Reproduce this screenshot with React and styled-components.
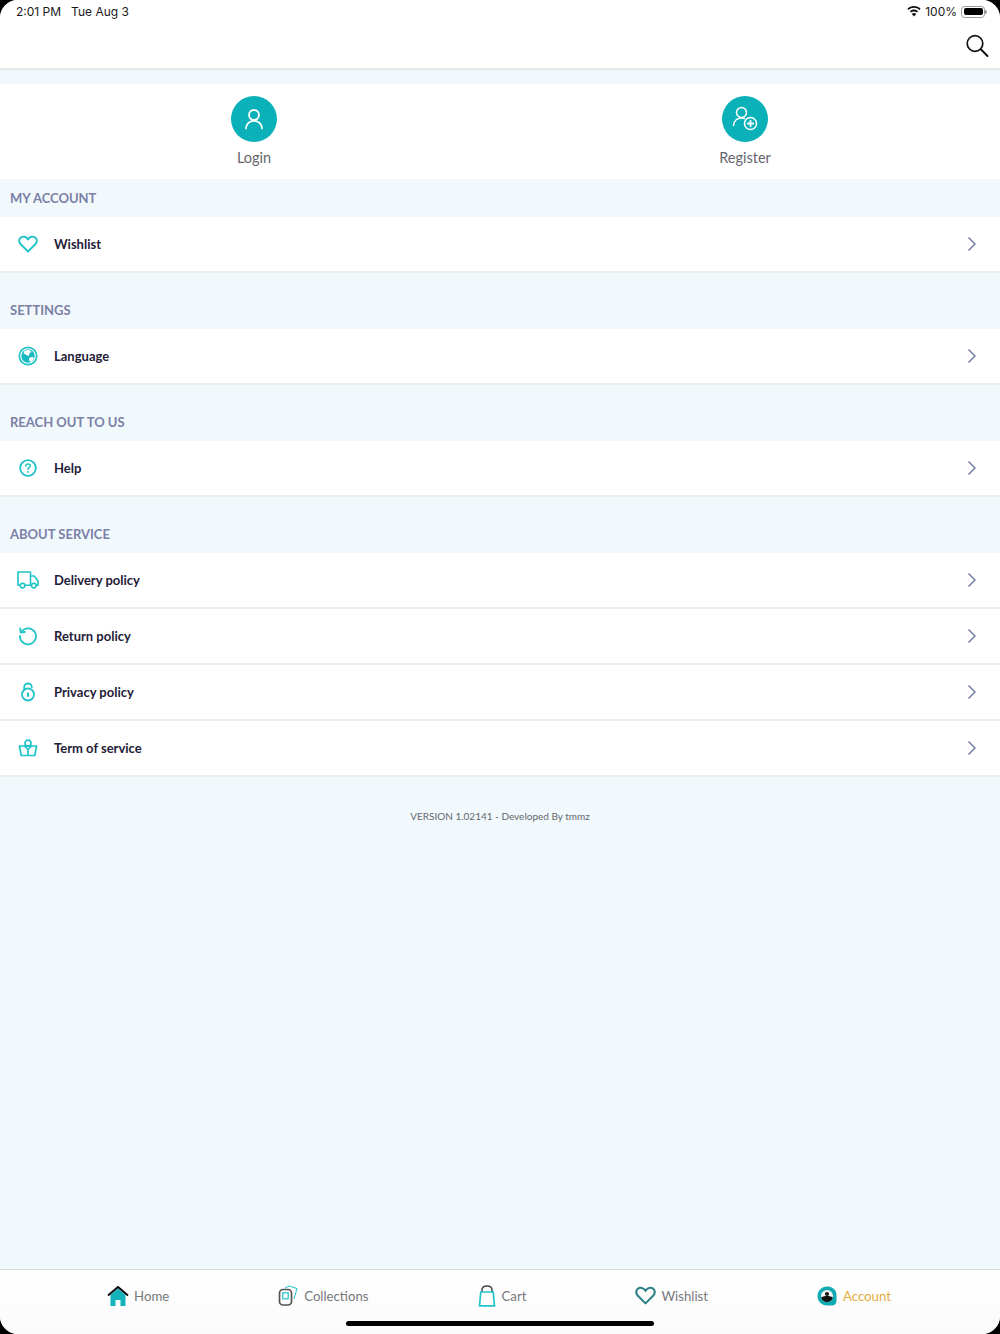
import React from 'react';
import styled, { createGlobalStyle } from 'styled-components';
import { ChevronRight } from 'lucide-react';

const TEAL = '#1fc4c9';

const Global = createGlobalStyle`
  html, body {
    margin: 0;
    padding: 0;
    background: #000;
  }
  * {
    box-sizing: border-box;
  }
`;

const HeartIcon = ({ color = TEAL, size = 20, width = 2.300 }) => (
  <svg width={size} height={size} viewBox="0 0 24 24" fill="none" stroke={color} strokeWidth={width} strokeLinejoin="round">
    <path d="M12 21 3 12C.6 9.400 1 5.800 3.400 4.100 6 2.300 9.900 3 12 6.600 14.100 3 18 2.300 20.600 4.100 23 5.800 23.400 9.400 21 12Z" />
  </svg>
);

const GlobeIcon = () => (
  <svg width="20" height="20" viewBox="0 0 20 20">
    <circle cx="10" cy="10" r="8.700" fill="none" stroke={TEAL} strokeWidth="1.700" />
    <circle cx="10" cy="10" r="6.700" fill="#17b8be" />
    <path d="M6.500 4.800 10.500 3.800l3 2-2.200 1.700L11 10 8.500 9 5.500 7.500ZM11 12l3.500-1.200 1.500 1.500-2.500 3.700-2.200-1Z" fill="#fff" />
  </svg>
);

const HelpIcon = () => (
  <svg width="20" height="20" viewBox="0 0 20 20" fill="none" stroke={TEAL} strokeWidth="1.800" strokeLinecap="round">
    <circle cx="10" cy="10" r="7.800" />
    <path d="M7.800 8.100C7.900 6.800 8.900 6.100 10 6.100 11.300 6.100 12.300 6.900 12.300 8 12.300 9.500 10 9.600 10 11.200" strokeWidth="1.500" />
    <path d="M10 13.800v.1" />
  </svg>
);

const TruckIcon = () => (
  <svg width="22" height="18" viewBox="0 0 22 18" fill="none" stroke={TEAL} strokeWidth="1.600" strokeLinejoin="round">
    <path d="M3.200 14.300H1V1h12.500v13.300H8" />
    <path d="M13.500 5h3.800l3.700 5v4.300h-2" />
    <path d="M13.500 14.300h1.300" />
    <circle cx="5.600" cy="14.600" r="2.300" />
    <circle cx="16.800" cy="14.600" r="2.300" />
  </svg>
);

const ReturnIcon = () => (
  <svg width="20" height="20" viewBox="0 0 20 20" fill="none" stroke={TEAL} strokeWidth="1.800" strokeLinecap="round" strokeLinejoin="round">
    <path d="M4.300 4.700A8 8 0 1 1 2 10" />
    <path d="M2.200 2.500 2.700 6.500 6.700 6" />
  </svg>
);

const LockIcon = () => (
  <svg width="18" height="20" viewBox="0 0 18 20" fill="none" stroke={TEAL} strokeWidth="1.800" strokeLinecap="round">
    <circle cx="9" cy="12.500" r="6" />
    <path d="M5.200 7.800V5.200C5.200 3 7 1.500 9 1.500S12.800 3 12.800 5.200" />
    <path d="M9 11.500v2.500" strokeWidth="2.200" />
  </svg>
);

const BasketIcon = () => (
  <svg width="20" height="18" viewBox="0 0 20 18" fill="none" stroke={TEAL} strokeWidth="1.700" strokeLinejoin="round">
    <path d="M1.500 7h17l-1.700 9.500H3.200Z" />
    <path d="M6.500 7 10 10.500 13.500 7" />
    <path d="M10 10.500v6" />
    <circle cx="10" cy="4.200" r="3" />
  </svg>
);

const UserIcon = () => (
  <svg width="22" height="24" viewBox="0 0 22 24" fill="none" stroke="#fff" strokeWidth="1.800" strokeLinecap="round">
    <circle cx="11" cy="8" r="5" />
    <path d="M3 21.500C3.500 16.500 7 13.800 11 13.800S18.500 16.500 19 21.500" />
  </svg>
);

const UserPlusIcon = () => (
  <svg width="28" height="28" viewBox="0 0 28 28" fill="none" stroke="#fff" strokeWidth="1.500" strokeLinecap="round">
    <circle cx="10.500" cy="7.500" r="5" />
    <path d="M2.500 20.500C3 15.500 6.500 13 10.500 13 11.500 13 12.500 13.200 13.400 13.500" />
    <circle cx="19.500" cy="18.500" r="6" />
    <path d="M19.500 15.800v5.400M16.800 18.500h5.400" strokeWidth="1.800" />
  </svg>
);

const SearchIcon = () => (
  <svg width="24" height="24" viewBox="0 0 24 24" fill="none" stroke="#111" strokeWidth="1.700" strokeLinecap="round">
    <circle cx="10" cy="9.500" r="7.800" />
    <path d="M15.800 15.300 22.500 22" strokeWidth="2" />
  </svg>
);

const WifiIcon = () => (
  <svg width="14" height="11" viewBox="0 0 14 11" fill="#111">
    <path d="M7 0C4.400 0 2.100 1 .4 2.700l1.200 1.300C3 2.600 4.900 1.800 7 1.800S11 2.600 12.400 4l1.200-1.300C11.900 1 9.600 0 7 0Z" />
    <path d="M7 3.600c-1.600 0-3 .6-4.100 1.700l1.200 1.300C4.900 5.800 5.900 5.400 7 5.400s2.100.4 2.900 1.200l1.200-1.300C10 4.200 8.600 3.600 7 3.600Z" />
    <path d="M7 7.100c-.9 0-1.700.3-2.300.9L7 10.500 9.300 8C8.700 7.400 7.900 7.100 7 7.100Z" />
  </svg>
);

const HomeIcon = () => (
  <svg width="22" height="20" viewBox="0 0 22 20">
    <path d="M3.500 9 11 2.500 18.500 9V20H13.500V14H8.500V20H3.500Z" fill="#12b3ba" />
    <path d="M1 9.500 11 1 21 9.500" fill="none" stroke="#0b0b0b" strokeWidth="2" />
  </svg>
);

const CollectionsIcon = () => (
  <svg width="20" height="22" viewBox="0 0 20 22" fill="none">
    <path d="M7 3 11 1 19 3.500 16 14" stroke={TEAL} strokeWidth="1" />
    <rect x="1.500" y="4.500" width="12" height="15.500" rx="3.500" stroke="#555" strokeWidth="1.700" />
    <rect x="4.800" y="7.800" width="5.400" height="6" stroke={TEAL} strokeWidth="1.200" />
  </svg>
);

const CartIcon = () => (
  <svg width="18" height="22" viewBox="0 0 18 22" fill="none">
    <path d="M4 7V5C4 2.500 6 1 9 1S14 2.500 14 5V7" stroke="#444" strokeWidth="1.500" />
    <path d="M2.800 7H15.200L16.500 20.800H1.500Z" stroke={TEAL} strokeWidth="1.700" />
  </svg>
);

const AccountIcon = () => (
  <svg width="20" height="20" viewBox="0 0 20 20">
    <path d="M10 .5C15 .5 19.500 3 19.500 10 19.500 13 20 17 18 18.500 16 20 13 19.500 10 19.500 4.500 19.500.5 15 .5 10S4.500.5 10 .5Z" fill="#12aab2" />
    <circle cx="10" cy="10" r="6" fill="#f4f4f4" />
    <path d="M4.200 11.500A6 6 0 0 0 15.800 11.500C14.500 10.500 12.500 10 10 10S5.500 10.500 4.200 11.500Z" fill="#111" />
    <circle cx="10" cy="8" r="2" fill="#111" />
  </svg>
);

const ChevronIcon = () => <ChevronRight size={24} color="#7b85a8" strokeWidth={1.700} />;

const sections = [
  {
    title: 'MY ACCOUNT',
    first: true,
    rows: [{ label: 'Wishlist', icon: <HeartIcon /> }],
  },
  {
    title: 'SETTINGS',
    rows: [{ label: 'Language', icon: <GlobeIcon /> }],
  },
  {
    title: 'REACH OUT TO US',
    rows: [{ label: 'Help', icon: <HelpIcon /> }],
  },
  {
    title: 'ABOUT SERVICE',
    rows: [
      { label: 'Delivery policy', icon: <TruckIcon /> },
      { label: 'Return policy', icon: <ReturnIcon /> },
      { label: 'Privacy policy', icon: <LockIcon /> },
      { label: 'Term of service', icon: <BasketIcon /> },
    ],
  },
];

const tabs = [
  { label: 'Home', icon: <HomeIcon />, gap: 5 },
  { label: 'Collections', icon: <CollectionsIcon />, gap: 6 },
  { label: 'Cart', icon: <CartIcon />, gap: 6 },
  { label: 'Wishlist', icon: <HeartIcon color="#2f8088" size={21} width={2.400} />, gap: 5 },
  { label: 'Account', icon: <AccountIcon />, gap: 6, active: true },
];

const App = () => (
  <Screen>
    <Global />
    <Rounded>
      <Top>
        <StatusBar>
          <Clock>
            <span>2:01 PM</span>
            <span>Tue Aug 3</span>
          </Clock>
          <StatusRight>
            <WifiIcon />
            <span>100%</span>
            <Battery>
              <BatteryFill />
            </Battery>
          </StatusRight>
        </StatusBar>
        <Header>
          <SearchIcon />
        </Header>
      </Top>

      <Main>
        <AuthCard>
          <AuthItem>
            <AuthCircle>
              <UserIcon />
            </AuthCircle>
            <AuthLabel>Login</AuthLabel>
          </AuthItem>
          <AuthItem>
            <AuthCircle>
              <UserPlusIcon />
            </AuthCircle>
            <AuthLabel>Register</AuthLabel>
          </AuthItem>
        </AuthCard>

        {sections.map((section) => (
          <div key={section.title}>
            <SectionTitle $first={section.first}>{section.title}</SectionTitle>
            {section.rows.map((row) => (
              <Row key={row.label}>
                <RowIcon>{row.icon}</RowIcon>
                <RowLabel>{row.label}</RowLabel>
                <ChevronIcon />
              </Row>
            ))}
          </div>
        ))}

        <Version>VERSION 1.02141 - Developed By tmmz</Version>
      </Main>

      <TabBar>
        <Tabs>
          {tabs.map((tab) => (
            <Tab key={tab.label} $gap={tab.gap}>
              {tab.icon}
              <TabLabel $active={tab.active}>{tab.label}</TabLabel>
            </Tab>
          ))}
        </Tabs>
        <HomeIndicator />
      </TabBar>
    </Rounded>
  </Screen>
);

const Screen = styled.div`
  width: 1000px;
  height: 1334px;
  overflow: hidden;
  background: #000;
  font-family: 'Lato', 'Noto Sans', sans-serif;
`;

const Rounded = styled.div`
  display: flex;
  flex-direction: column;
  height: 100%;
  border-radius: 18px;
  overflow: hidden;
  background: #f2f9fc;
`;

const Top = styled.div`
  height: 70px;
  flex-shrink: 0;
  background: #fff;
  border-bottom: 2px solid #e6e8e8;
`;

const StatusBar = styled.div`
  display: flex;
  justify-content: space-between;
  align-items: center;
  height: 23px;
  padding: 0 15px 0 16px;
  color: #1a1a1a;
  font-family: 'Inter', sans-serif;
  font-size: 12px;
`;

const Clock = styled.div`
  display: flex;
  gap: 10px;
`;

const StatusRight = styled.div`
  display: flex;
  align-items: center;
  gap: 4px;
`;

const Battery = styled.div`
  position: relative;
  width: 24px;
  height: 12px;
  padding: 1.500px;
  border: 1px solid #999;
  border-radius: 3.500px;

  &::after {
    content: '';
    position: absolute;
    top: 3px;
    right: -3px;
    width: 2px;
    height: 4px;
    border-radius: 0 2px 2px 0;
    background: #999;
  }
`;

const BatteryFill = styled.div`
  width: 100%;
  height: 100%;
  border-radius: 2px;
  background: #000;
`;

const Header = styled.div`
  display: flex;
  justify-content: flex-end;
  padding: 11px 11px 0 0;
`;

const Main = styled.div`
  flex: 1;
  padding-top: 14px;
`;

const AuthCard = styled.div`
  display: grid;
  grid-template-columns: 508px 474px;
  height: 95px;
  padding-top: 12px;
  background: #fff;
`;

const AuthItem = styled.div`
  display: flex;
  flex-direction: column;
  align-items: center;
  gap: 6px;
`;

const AuthCircle = styled.div`
  display: flex;
  justify-content: center;
  align-items: center;
  width: 46px;
  height: 46px;
  border-radius: 50%;
  background: #0bb1b8;
`;

const AuthLabel = styled.div`
  color: #65666d;
  font-size: 14.500px;
  line-height: 20px;
`;

const SectionTitle = styled.div`
  display: flex;
  align-items: flex-end;
  height: ${(p) => (p.$first ? '38px' : '56px')};
  padding: 0 0 10px 10px;
  color: #7b80a8;
  font-size: 13px;
  font-weight: 700;
  line-height: 17px;
`;

const Row = styled.div`
  display: flex;
  align-items: center;
  height: 56px;
  padding: 0 16px 1px 16px;
  background: #fff;
  border-bottom: 2px solid #ecefef;
`;

const RowIcon = styled.div`
  display: flex;
  justify-content: center;
  align-items: center;
  width: 23px;
  margin-right: 15px;
`;

const RowLabel = styled.div`
  flex: 1;
  color: #1f2038;
  font-size: 13px;
  font-weight: 700;
`;

const Version = styled.div`
  margin-top: 32px;
  color: #63686e;
  font-size: 10px;
  line-height: 14px;
  text-align: center;
`;

const TabBar = styled.div`
  height: 65px;
  flex-shrink: 0;
  background: linear-gradient(#fff, #fbfbfb);
  border-top: 1px solid #d8dfe3;
`;

const Tabs = styled.div`
  display: flex;
  justify-content: center;
  gap: 109px;
  height: 51px;
  padding-right: 2px;
`;

const Tab = styled.div`
  display: flex;
  align-items: center;
  gap: ${(p) => p.$gap}px;
`;

const TabLabel = styled.span`
  color: ${(p) => (p.$active ? '#e3ad3c' : '#77787c')};
  font-size: 13.200px;
`;

const HomeIndicator = styled.div`
  width: 308px;
  height: 5px;
  margin: 0 auto;
  border-radius: 3px;
  background: #000;
`;

export default App;
